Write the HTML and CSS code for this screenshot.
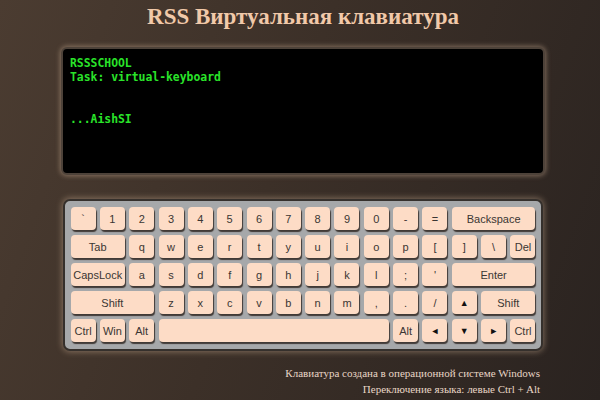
FILE: index.html
```html
<!DOCTYPE html>
<html lang="ru">
<head>
<meta charset="utf-8">
<title>RSS Виртуальная клавиатура</title>
<link rel="stylesheet" href="styles.css">
</head>
<body>
<main class="page">
  <h1 class="title">RSS Виртуальная клавиатура</h1>
  <div class="screen">RSSSCHOOL
Task: virtual-keyboard


...AishSI</div>
  <div class="keyboard">
    <div class="key">`</div><div class="key">1</div><div class="key">2</div><div class="key">3</div><div class="key">4</div><div class="key">5</div><div class="key">6</div><div class="key">7</div><div class="key">8</div><div class="key">9</div><div class="key">0</div><div class="key">-</div><div class="key">=</div><div class="key w3">Backspace</div>
    <div class="key w2">Tab</div><div class="key">q</div><div class="key">w</div><div class="key">e</div><div class="key">r</div><div class="key">t</div><div class="key">y</div><div class="key">u</div><div class="key">i</div><div class="key">o</div><div class="key">p</div><div class="key">[</div><div class="key">]</div><div class="key">\</div><div class="key">Del</div>
    <div class="key w2">CapsLock</div><div class="key">a</div><div class="key">s</div><div class="key">d</div><div class="key">f</div><div class="key">g</div><div class="key">h</div><div class="key">j</div><div class="key">k</div><div class="key">l</div><div class="key">;</div><div class="key">'</div><div class="key w3">Enter</div>
    <div class="key w3">Shift</div><div class="key">z</div><div class="key">x</div><div class="key">c</div><div class="key">v</div><div class="key">b</div><div class="key">n</div><div class="key">m</div><div class="key">,</div><div class="key">.</div><div class="key">/</div><div class="key arrow">▲</div><div class="key w2">Shift</div>
    <div class="key">Ctrl</div><div class="key">Win</div><div class="key">Alt</div><div class="key w8"></div><div class="key">Alt</div><div class="key arrow">◄</div><div class="key arrow">▼</div><div class="key arrow">►</div><div class="key">Ctrl</div>
  </div>
  <div class="notes">
    <p>Клавиатура создана в операционной системе Windows</p>
    <p>Переключение языка: левые Ctrl + Alt</p>
  </div>
</main>
</body>
</html>
```
FILE: styles.css
```css
html, body {
  margin: 0;
  height: 100%;
}
body {
  background: linear-gradient(110deg, #4b3c31 0%, #3c3028 45%, #2a2320 100%);
  overflow: hidden;
}
.page {
  width: 600px;
  height: 400px;
  box-sizing: border-box;
  padding-left: 6px;
  display: flex;
  flex-direction: column;
  align-items: center;
}
.title {
  margin: 3px 0 0;
  font-family: "Liberation Serif", serif;
  font-weight: bold;
  font-size: 23px;
  line-height: 28px;
  color: #f1c9a9;
}
.screen {
  margin-top: 16px;
  width: 484px;
  height: 128px;
  box-sizing: border-box;
  border: 2px solid #4d4239;
  border-radius: 6px;
  background: #000;
  box-shadow: 0 0 5px 1px rgba(214, 184, 156, 0.45);
  padding: 7px 7px 6px;
  white-space: pre;
  font-family: "DejaVu Sans Mono", monospace;
  font-weight: bold;
  font-size: 11.4px;
  line-height: 14px;
  color: #2ae42a;
}
.keyboard {
  margin-top: 24px;
  box-sizing: border-box;
  border: 2px solid #35302c;
  border-radius: 7px;
  background: #a6a8aa;
  box-shadow: 0 0 6px 1px rgba(214, 184, 156, 0.45);
  padding: 6px 6px 7px 6px;
  display: grid;
  grid-template-columns: repeat(16, 25px);
  grid-auto-rows: 23px;
  column-gap: 4.33px;
  row-gap: 5.1px;
}
.key {
  background: #fddcc6;
  border-radius: 4px;
  box-shadow: 1px 2px 1px rgba(40, 30, 25, 0.8);
  display: flex;
  align-items: center;
  justify-content: center;
  font-family: "Liberation Sans", Arial, sans-serif;
  font-size: 11px;
  color: #3a3633;
}
.w2 { grid-column: span 2; }
.w3 { grid-column: span 3; }
.w8 { grid-column: span 8; }
.arrow {
  font-size: 9px;
  color: #111;
}
.notes {
  align-self: flex-end;
  margin: 14px 60px 0 0;
  text-align: right;
  font-family: "Liberation Serif", serif;
  font-size: 11px;
  line-height: 16px;
  color: #e8d6c6;
}
.notes p {
  margin: 0;
}
```
